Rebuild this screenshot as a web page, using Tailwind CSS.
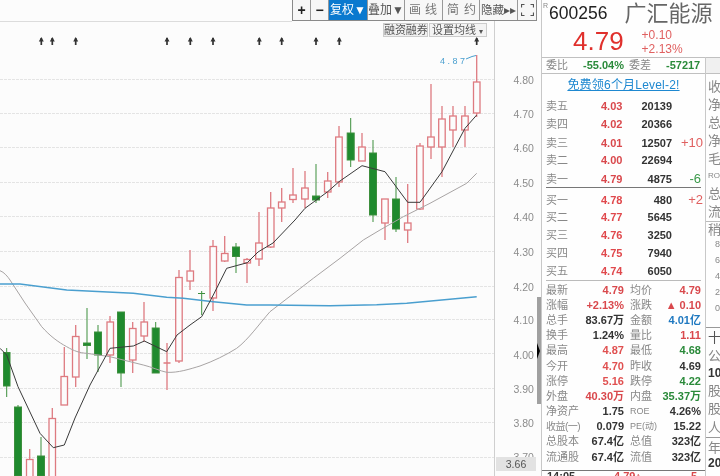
<!DOCTYPE html>
<html><head><meta charset="utf-8"><script src="https://cdn.jsdelivr.net/npm/@tailwindcss/browser@4"></script></head>
<body class="m-0 bg-white">
<div class="flex w-[720px] h-[476px] overflow-hidden bg-[#fcfcfc] font-['Liberation_Sans','Noto_Sans_CJK_SC',sans-serif] blur-[0.35px]">
  <div class="relative w-[541px] h-full shrink-0">
    <svg class="absolute inset-0" width="541" height="476" viewBox="0 0 541 476" fill="none">
      <g stroke="#e4e4e4" stroke-width="1">
        <path stroke="#dcdcdc" d="M0 21.5H292"/>
        <path stroke-dasharray="3 1" d="M0 79.500H495M0 113.500H495M0 147.500H495M0 182.500H495M0 216.500H495M0 251.500H495M0 286.500H495M0 319.500H495M0 353.500H495M0 388.500H495M0 422.500H495M0 457.500H495"/>
        <path stroke="#cfcfcf" d="M494.500 21V476"/>
      </g>
      <g stroke="#3d8f3d" fill="#1f8a2e"><path d="M6.700 348V397"/><rect x="3.500" y="352.500" width="6.500" height="33.500"/><path d="M18 405V476"/><rect x="14.500" y="407" width="7" height="69"/><path d="M41 437V476"/><rect x="37.500" y="456" width="7" height="20"/><path d="M87 308V359"/><rect x="83.500" y="343" width="7" height="2.500"/><path d="M98 325V372"/><rect x="94.500" y="332" width="7" height="23"/><path d="M121 312V387"/><rect x="117.500" y="312" width="7" height="61"/><path d="M155.700 322V373"/><rect x="152.200" y="328" width="7" height="45"/><path d="M201.700 291V315M198 293.500H205"/><path d="M236 243V273"/><rect x="232.500" y="247" width="7" height="9.500"/><path d="M316 164V203"/><rect x="312.500" y="196" width="7" height="4"/><path d="M350.700 118V167"/><rect x="347.200" y="133" width="7" height="27"/><path d="M373 140V222"/><rect x="369.500" y="153" width="7" height="62"/><path d="M396 177V232"/><rect x="392.500" y="199" width="7" height="30"/></g>
      <g stroke="#de7a80" fill="#fcfcfc" stroke-width="1.300"><path d="M29.700 449V476"/><rect x="26.500" y="459.500" width="6.500" height="20"/><path d="M52.300 408V476"/><rect x="49" y="418.500" width="6.500" height="60"/><path d="M64.300 347V405"/><rect x="61" y="376.500" width="6.500" height="28.500"/><path d="M75.700 325V387"/><rect x="72.500" y="336.500" width="6.500" height="40.500"/><path d="M110 316V363"/><rect x="107" y="322" width="6.500" height="33"/><path d="M132.700 322V373"/><rect x="129.500" y="328.500" width="6.500" height="31.500"/><path d="M144 302V342"/><rect x="141" y="322" width="6.500" height="14"/><path d="M167 343V390M163.500 363H170.500"/><path d="M179 270V363"/><rect x="175.700" y="277.500" width="6.500" height="83.500"/><path d="M190 250V290"/><rect x="187" y="271" width="6.500" height="10"/><path d="M213 240V311"/><rect x="210" y="246.500" width="6.500" height="51.500"/><path d="M224.700 236V262"/><rect x="221.500" y="253.500" width="6.500" height="7.500"/><path d="M247 258V283"/><rect x="244" y="259.500" width="6.500" height="3.500"/><path d="M259 212V266"/><rect x="255.700" y="243" width="6.500" height="16"/><path d="M270.700 192V248"/><rect x="267.500" y="208" width="6.500" height="39"/><path d="M281.700 188V222"/><rect x="278.500" y="202" width="6.500" height="6"/><path d="M293 168V203"/><rect x="289.700" y="195" width="6.500" height="4.500"/><path d="M305 171V208"/><rect x="301.700" y="188" width="6.500" height="11"/><path d="M327.700 172V198"/><rect x="324.500" y="181" width="6.500" height="11"/><path d="M339 126V187"/><rect x="335.700" y="137" width="6.500" height="45"/><path d="M362 133V147"/><rect x="358.700" y="147" width="6.500" height="14"/><path d="M385 223V240"/><rect x="381.700" y="199" width="6.500" height="24"/><path d="M407.700 184V243"/><rect x="404.500" y="223" width="6.500" height="7"/><path d="M420 143V210"/><rect x="416.700" y="146" width="6.500" height="63"/><path d="M431 84V159"/><rect x="427.700" y="137" width="6.500" height="10"/><path d="M442 106V177"/><rect x="438.700" y="119" width="6.500" height="28"/><path d="M453 106V147"/><rect x="449.700" y="116" width="6.500" height="14"/><path d="M465 106V147"/><rect x="461.700" y="116" width="6.500" height="14"/><path d="M476.700 55V117"/><rect x="473.500" y="82" width="6.500" height="31"/></g>
      <path stroke="#a8a4a4" stroke-width="1" stroke-linejoin="round" d="M0 270.700C4 272 8 277 10 280L25 303L41.700 326.700C50 336 58 342 66.700 346.700C74 351 80 353 86.700 353.300L110 356.700L143.300 365C152 367 160 371 166.700 372.300C178 373 190 369 200 366C214 361 226 355 236.700 348.300C248 340 260 323 270 311.700L313.300 278.300L340 258.300L363.300 240L380 230L403.300 216.700L430 203.300L466.700 183.300L476.700 173.300"/>
      <path stroke="#4a9fcf" stroke-width="1.400" d="M0 284L20 284L66.700 290L133.300 293.300L166.700 297.300L183.300 298.300L213.300 301.700L246.700 305L270 305L330 305.700L376.700 304.700L406.700 303.300L476.700 296.700"/>
      <path stroke="#3a3a3a" stroke-width="1" stroke-linejoin="round" d="M0 348.300L6.700 355L18 386.700L40 433.300L53.300 447.700L64.300 445L75 418L90 385L110 348.300L133.300 346L144.300 341L166.700 351.700L177 335L190 325L201.700 316.700L213.300 295L226.700 268.300L247.300 262.700L258 252L273 243L295 220L305 208.300L327.700 191.700L339 181.700L362 165.700L385 171.700L407.700 202.300L420 202.300L442 171.700L465 128.300L476.700 115"/>
      <path stroke="#4a9fcf" stroke-width="1" d="M466 59L472 56.500L476 55.500"/>
      <text x="440" y="64" fill="#4a9fcf" font-size="9" letter-spacing="2.500" font-family="Liberation Sans">4.87</text>
      <g stroke="#333" stroke-width="1.700"><path d="M41.300 38V45M52.300 38V45M75.700 38V45M167 38V45M190.300 38V45M213 38V45M259.300 38V45M281.700 38V45M316 38V45M339.300 38V45M476.700 38V45"/></g>
      <g fill="#333"><path d="M38.800 41.500L41.300 37L43.800 41.500ZM49.800 41.500L52.300 37L54.800 41.500ZM73.200 41.500L75.700 37L78.200 41.500ZM164.500 41.500L167 37L169.500 41.500ZM187.800 41.500L190.300 37L192.800 41.500ZM210.500 41.500L213 37L215.500 41.500ZM256.800 41.500L259.300 37L261.800 41.500ZM279.200 41.500L281.700 37L284.200 41.500ZM313.500 41.500L316 37L318.500 41.500ZM336.800 41.500L339.300 37L341.800 41.500ZM474.200 41.500L476.700 37L479.200 41.500Z"/></g>
      <g fill="#8c8c8c" font-size="10.500" font-family="Liberation Sans">
        <text x="513.500" y="84">4.80</text><text x="513.500" y="117.700">4.70</text><text x="513.500" y="152">4.60</text><text x="513.500" y="186.700">4.50</text><text x="513.500" y="221">4.40</text><text x="513.500" y="255.700">4.30</text><text x="513.500" y="290.700">4.20</text><text x="513.500" y="324">4.10</text><text x="513.500" y="358.700">4.00</text><text x="513.500" y="393">3.90</text><text x="513.500" y="427">3.80</text><text x="513.500" y="461">3.70</text>
      </g>
    </svg>
    <div class="absolute left-[496px] top-[457px] w-[40px] h-[14px] bg-[#e2e2e2] text-[10.5px] leading-[14px] text-center text-[#555]">3.66</div>
    <div class="absolute left-[537px] top-[297px] w-[4px] h-[107px] bg-[#a0a0a0]"></div>
    <div class="absolute left-[537px] top-[343px] w-0 h-0 border-y-[8px] border-y-transparent border-l-[3px] border-l-black"></div>
    <div class="absolute left-[535px] top-0 w-[2px] h-[20px] bg-[#bbb]"></div>
    <div class="relative flex flex-col items-end pr-[4px]">
      <div class="flex h-[21px] w-[245px] border-x border-b border-[#8a8a8a] text-[12px] leading-[20px] text-center text-[#777] bg-[#f7f7f7] divide-x divide-[#999]">
        <div class="w-[18px] text-[#222] font-bold text-[14px]">+</div>
        <div class="w-[18px] text-[#222] font-bold text-[14px]">−</div>
        <div class="w-[39px] bg-[#0a79cf] text-white whitespace-nowrap">复权▼</div>
        <div class="w-[37px] text-[#555] whitespace-nowrap">叠加▼</div>
        <div class="w-[38px] tracking-[4px] pl-[3px]">画线</div>
        <div class="w-[37px] tracking-[5px] pl-[4px] whitespace-nowrap">简约</div>
        <div class="w-[38px] text-[#555] text-[11.5px] whitespace-nowrap">隐藏▸▸</div>
        <div class="flex-1 flex items-center justify-center">
          <svg width="13" height="12" viewBox="0 0 13 12" fill="none" stroke="#555" stroke-width="1.200"><path d="M0.500 3.500V0.500H3.500M9.500 0.500H12.500V3.500M12.500 8.500V11.500H9.500M3.500 11.500H0.500V8.500"/></svg>
        </div>
      </div>
      <div class="flex gap-[1px] mt-[2px] mr-[50px] text-[11px] leading-[13px] text-[#555]">
        <div class="w-[45px] h-[14px] border border-[#ccc] bg-[#f0f0f0] text-center whitespace-nowrap overflow-hidden tracking-[-0.1px]">融资融券</div>
        <div class="w-[58px] h-[14px] border border-[#ccc] bg-[#f4f4f4] pl-[2px] whitespace-nowrap overflow-hidden">设置均线 <span class="text-[8px]">▾</span></div>
      </div>
    </div>
  </div>
  <div class="w-[179px] h-full shrink-0 border-l border-[#c8c8c8] bg-[#fefefe] flex flex-col">
    <div class="relative h-[26px] flex items-center pl-[7px] shrink-0">
      <span class="absolute left-[1px] top-[1px] text-[7px] text-[#888]">R</span>
      <span class="text-[17.500px] text-[#222] mr-[17px]">600256</span>
      <span class="text-[22px] text-[#666] whitespace-nowrap">广汇能源</span>
    </div>
    <div class="flex h-[31px] items-center pl-[31px] text-[#e0302c] shrink-0">
      <span class="text-[26px]">4.79</span>
      <div class="ml-[18px] text-[12px] leading-[14px] text-[#e06060]"><div>+0.10</div><div>+2.13%</div></div>
    </div>
    <div class="flex flex-1 min-h-0">
      <div class="w-[164px] shrink-0 border-r border-[#c8c8c8] flex flex-col">
        <div class="flex items-center h-[17px] border-y border-[#c0c0c0] text-[11px] pl-[4px] text-[#888] whitespace-nowrap shrink-0">
          <span>委比</span><b class="ml-[15px] text-[#2a8a3a]">-55.04%</b><span class="ml-[5px]">委差</span><b class="ml-[15px] text-[#2a8a3a]">-57217</b>
        </div>
        <div class="h-[23px] text-[12px] leading-[23px] text-center text-[#1e88d0] underline whitespace-nowrap tracking-[0.2px] shrink-0">免费领6个月Level-2!</div>
        <div class="flex flex-col text-[11px] text-[#888] shrink-0">
          <div class="grid grid-cols-[55px_40px_31px_31px] pl-[4px] h-[18px] items-center"><span>卖五</span><b class="text-[#d9484c]">4.03</b><b class="text-[#333] text-right">20139</b></div>
          <div class="grid grid-cols-[55px_40px_31px_31px] pl-[4px] h-[18px] items-center"><span>卖四</span><b class="text-[#d9484c]">4.02</b><b class="text-[#333] text-right">20366</b></div>
          <div class="grid grid-cols-[55px_40px_31px_31px] pl-[4px] h-[18px] items-center"><span>卖三</span><b class="text-[#d9484c]">4.01</b><b class="text-[#333] text-right">12507</b><span class="text-[#e06060] text-[13px] text-right">+10</span></div>
          <div class="grid grid-cols-[55px_40px_31px_31px] pl-[4px] h-[18px] items-center"><span>卖二</span><b class="text-[#d9484c]">4.00</b><b class="text-[#333] text-right">22694</b></div>
          <div class="grid grid-cols-[55px_40px_31px_31px] pl-[4px] h-[18px] items-center"><span>卖一</span><b class="text-[#d9484c]">4.79</b><b class="text-[#333] text-right">4875</b><span class="text-[#3a9a4a] text-[13px] text-right pr-[2px]">-6</span></div>
        </div>
        <div class="h-[1px] mx-[4px] bg-[#777] shrink-0"></div>
        <div class="flex flex-col mt-[2px] text-[11px] text-[#888] shrink-0">
          <div class="grid grid-cols-[55px_40px_31px_31px] pl-[4px] h-[18px] items-center"><span>买一</span><b class="text-[#e0484c]">4.78</b><b class="text-[#333] text-right">480</b><span class="text-[#e06060] text-[13px] text-right">+2</span></div>
          <div class="grid grid-cols-[55px_40px_31px_31px] pl-[4px] h-[18px] items-center"><span>买二</span><b class="text-[#e0484c]">4.77</b><b class="text-[#333] text-right">5645</b></div>
          <div class="grid grid-cols-[55px_40px_31px_31px] pl-[4px] h-[18px] items-center"><span>买三</span><b class="text-[#e0484c]">4.76</b><b class="text-[#333] text-right">3250</b></div>
          <div class="grid grid-cols-[55px_40px_31px_31px] pl-[4px] h-[18px] items-center"><span>买四</span><b class="text-[#e0484c]">4.75</b><b class="text-[#333] text-right">7940</b></div>
          <div class="grid grid-cols-[55px_40px_31px_31px] pl-[4px] h-[18px] items-center"><span>买五</span><b class="text-[#e0484c]">4.74</b><b class="text-[#333] text-right">6050</b></div>
        </div>
        <div class="h-[1px] mx-[4px] bg-[#bbb] shrink-0"></div>
        <div class="grid grid-cols-[34px_44px_32px_45px] auto-rows-[15.200px] items-center mt-[1.500px] pl-[4px] text-[11px] leading-none text-[#888] shrink-0 [&>b]:text-right [&>b]:whitespace-nowrap [&>span]:whitespace-nowrap [&>span:nth-child(4n+3)]:pl-[6px]">
          <span>最新</span><b class="text-[#d9484c]">4.79</b><span>均价</span><b class="text-[#d9484c]">4.79</b>
          <span>涨幅</span><b class="text-[#d9484c]">+2.13%</b><span>涨跌</span><b class="text-[#d9484c]">▲ 0.10</b>
          <span>总手</span><b class="text-[#333]">83.67万</b><span>金额</span><b class="text-[#1e78c0]">4.01亿</b>
          <span>换手</span><b class="text-[#333]">1.24%</b><span>量比</span><b class="text-[#d9484c]">1.11</b>
          <span>最高</span><b class="text-[#e05050]">4.87</b><span>最低</span><b class="text-[#2a8a3a]">4.68</b>
          <span>今开</span><b class="text-[#e05050]">4.70</b><span>昨收</span><b class="text-[#333]">4.69</b>
          <span>涨停</span><b class="text-[#e05050]">5.16</b><span>跌停</span><b class="text-[#2a8a3a]">4.22</b>
          <span>外盘</span><b class="text-[#d9484c]">40.30万</b><span>内盘</span><b class="text-[#2a8a3a]">35.37万</b>
          <span>净资产</span><b class="text-[#333]">1.75</b><span class="text-[9px]">ROE</span><b class="text-[#333]">4.26%</b>
          <span class="text-[10px] tracking-tighter">收益(一)</span><b class="text-[#333]">0.079</b><span class="text-[9px]">PE(动)</span><b class="text-[#333]">15.22</b>
          <span>总股本</span><b class="text-[#333]">67.4亿</b><span>总值</span><b class="text-[#333]">323亿</b>
          <span>流通股</span><b class="text-[#333]">67.4亿</b><span>流值</span><b class="text-[#333]">323亿</b>
        </div>
        <div class="grid grid-cols-[67px_77px_1fr] border-t border-[#777] mt-[5px] pl-[5px] text-[11px] font-bold text-[#333] leading-[11px] shrink-0"><span>14:05</span><span class="text-[#d9484c]">4.79↑</span><span class="text-[#d9484c]">5</span></div>
      </div>
      <div class="flex-1 min-w-0 flex flex-col text-[13px] text-[#888] leading-none whitespace-nowrap overflow-hidden">
        <div class="h-[17px] bg-[#f0f0f0] border-y border-[#c0c0c0] shrink-0"></div>
        <div class="flex flex-col pt-[4px] pl-[2px] shrink-0">
          <div class="h-[17.800px] flex items-center">收</div><div class="h-[17.800px] flex items-center">净</div><div class="h-[17.800px] flex items-center">总</div><div class="h-[17.800px] flex items-center">净</div><div class="h-[17.800px] flex items-center">毛</div><div class="h-[17.800px] flex items-center text-[8px]">ROE</div><div class="h-[17.800px] flex items-center">总</div><div class="h-[17.800px] flex items-center">流</div>
        </div>
        <div class="border-t border-[#bbb] mt-[1px] pl-[2px] pt-[1px] shrink-0 h-[15px]">稍</div>
        <div class="flex flex-col pl-[9px] text-[9px] text-[#888] shrink-0">
          <div class="h-[16px] flex items-center">8</div><div class="h-[16px] flex items-center">6</div><div class="h-[16px] flex items-center">4</div><div class="h-[16px] flex items-center">2</div><div class="h-[16px] flex items-center">0</div>
        </div>
        <div class="border-t border-[#999] mt-[11px] pl-[2px] shrink-0">
          <div class="h-[18px] flex items-center text-[#555]">十大</div><div class="h-[18px] flex items-center">公</div><div class="h-[17px] flex items-center font-bold text-[#333] text-[12px]">10</div><div class="h-[18px] flex items-center">股</div><div class="h-[18px] flex items-center">股</div><div class="h-[20px] flex items-center">人</div>
        </div>
        <div class="border-t border-[#999] pl-[2px] shrink-0">
          <div class="h-[18px] flex items-center">年</div><div class="h-[14px] flex items-center text-[#333] font-bold text-[12px]">20</div>
        </div>
      </div>
    </div>
  </div>
</div>
</body></html>
